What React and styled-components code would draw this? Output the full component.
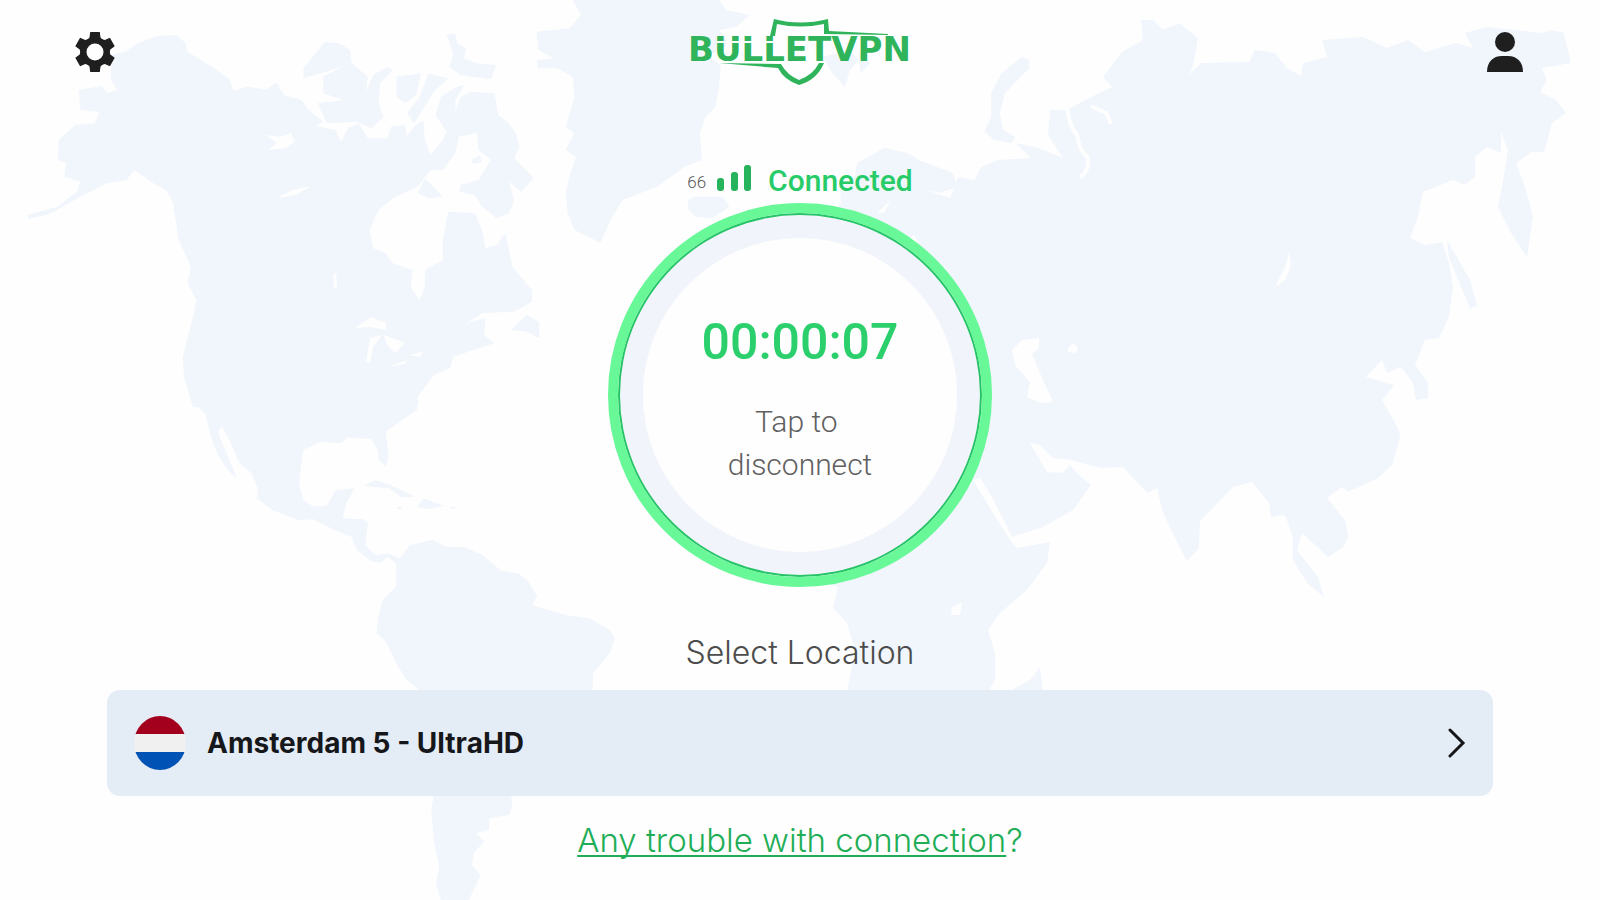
// ---------- BulletVPN : connection screen ----------

import React, { useState } from 'react';
import styled, { createGlobalStyle } from 'styled-components';

// ----- styles -----

const GlobalStyle = createGlobalStyle`
    * {
        box-sizing: border-box;
    }
    body {
        margin: 0;
        background-color: #fefefe;
        font-family: Inter, "Open Sans", sans-serif;
    }
    button {
        border: none;
        background: none;
        padding: 0;
        font: inherit;
        cursor: pointer;
    }
`

const Screen = styled.div`
    position: relative;
    min-height: 100vh;
    overflow: hidden;
    display: flex;
    flex-direction: column;
`

const MapSvg = styled.svg`
    position: absolute;
    inset: 0;
    width: 100%;
    height: 100%;
`

const Header = styled.header`
    position: relative;
    display: grid;
    grid-template-columns: 1fr auto 1fr;
    align-items: center;
    padding: 18px 70px 0;
`

const IconButton = styled.button`
    display: flex;
    justify-self: ${props => props.$side};
    color: #1f1f1f;
`

const Main = styled.main`
    position: relative;
    display: flex;
    flex-direction: column;
    align-items: center;
    padding: 76px 107px 30px;
`

const Status = styled.div`
    display: flex;
    align-items: center;
    height: 38px;
    margin-bottom: 3px;
    font-family: Roboto, sans-serif;
`

const Ping = styled.span`
    font-size: 17px;
    font-weight: 300;
    line-height: 20px;
    color: #555;
    margin: 2px 11px 0 0;
`

const StatusText = styled.span`
    font-size: 30px;
    font-weight: 500;
    line-height: 36px;
    color: #27cc69;
    margin-left: 15px;
`

const Ring = styled.button`
    width: 384px;
    height: 384px;
    padding: 25px;
    border: 10px solid #68f898;
    border-radius: 50%;
    background-color: #f1f5fb;
    box-shadow: inset 0 0 0 2px #27c467;
    font-family: Roboto, sans-serif;
`

const Disc = styled.span`
    width: 100%;
    height: 100%;
    display: flex;
    flex-direction: column;
    align-items: center;
    justify-content: center;
    gap: 29px;
    padding-top: 9px;
    border-radius: 50%;
    background-color: #fefefe;
`

const Timer = styled.span`
    font-size: 50px;
    font-weight: 500;
    line-height: 58px;
    color: #2bcf6c;
`

const Hint = styled.span`
    font-size: 30px;
    font-weight: 300;
    line-height: 43px;
    white-space: pre;
    color: #606060;
`

const Label = styled.h2`
    margin: 46px 0 17px;
    font-size: 32px;
    font-weight: 300;
    line-height: 40px;
    color: #4c4c4c;
`

const LocationButton = styled.button`
    width: 100%;
    height: 106px;
    display: flex;
    align-items: center;
    padding: 0 27px;
    border-radius: 13px;
    background-color: #e4ecf5;
    color: #15171a;
`

const LocationName = styled.span`
    flex: 1;
    margin-left: 21px;
    text-align: left;
    font-size: 28px;
    font-weight: 700;
    line-height: 36px;
`

const Help = styled.p`
    margin: 24px 0 0;
    font-size: 33px;
    font-weight: 300;
    line-height: 40px;
    color: #1fae57;
`

const HelpLink = styled.a`
    color: inherit;
    text-decoration: underline;
    text-decoration-thickness: 2px;
    text-underline-offset: 3px;
    text-decoration-skip-ink: none;
`

const LogoText = styled.text`
    font-family: "DejaVu Sans", sans-serif;
    font-size: 34px;
    font-weight: 700;
`

// ----- drawings -----

const WorldMap = () => (
    <MapSvg viewBox="0 0 1600 900" preserveAspectRatio="xMidYMin slice" aria-hidden="true">
        <g fill="#f1f6fc">
            {/* north america */}
            <g transform="scale(0.3571 0.3333)">
                <path d="M78 645L160 620 215 575 225 545 180 530 185 490 162 480 165 420 210 375 265 370 278 335 225 330 220 270 285 258 300 278 328 270 310 240 312 165 350 155 385 130 440 108 495 105 520 130 525 155 600 205 640 235 655 272 690 260 745 268 775 248 795 285 845 300 860 325 905 365 885 378 940 390 955 425 975 385 1005 370 1030 415 1085 415 1095 380 1135 375 1140 410 1105 450 1130 420 1160 380 1185 360 1190 420 1205 465 1240 420 1250 395 1220 345 1235 290 1270 265 1300 255 1275 300 1275 335 1290 290 1320 275 1385 280 1395 345 1420 365 1445 400 1455 440 1440 475 1495 535 1460 575 1425 545 1440 600 1425 640 1390 655 1350 620 1330 585 1285 575 1290 555 1340 540 1375 480 1340 450 1335 400 1285 410 1275 460 1240 510 1205 510 1170 560 1100 595 1060 630 1035 690 1045 745 1080 760 1100 790 1155 810 1150 860 1175 900 1190 860 1190 810 1240 780 1240 720 1255 635 1330 640 1350 690 1360 745 1390 735 1415 700 1435 800 1490 870 1490 905 1440 935 1350 940 1305 970 1360 955 1355 1005 1385 1030 1340 1045 1270 1070 1260 1105 1215 1125 1170 1190 1168 1222 540 1222 515 1130 512 1070 545 930 550 900 525 850 535 800 500 720 485 610 465 570 430 550 375 510 355 540 300 550 225 590 140 642 78 657Z" />
                <path d="M890 310L960 300 905 280 905 230 960 200 850 235 850 205 910 125 950 130 980 150 985 190 1030 230 1025 275 1045 225 1085 200 1100 210 1065 250 1060 310 1075 350 1040 385 1000 365 915 370Z" />
                <path d="M1110 230L1180 220 1165 285 1135 310 1110 290ZM1200 220L1255 235 1215 275 1160 370 1140 340 1175 290Z" />
                <path d="M1250 105L1275 100 1280 130 1305 145 1300 175 1335 190 1390 195 1375 238 1290 225 1258 200 1270 160Z" />
                <path d="M1320 480L1345 465 1350 485 1325 492ZM1170 580L1190 535 1240 590 1200 595ZM1430 990L1475 945 1510 965 1510 1015 1475 995Z" />
            </g>
            {/* central and south america */}
            <g transform="translate(100 400) scale(0.3444 0.3333)">
                <path d="M262 0L305 40 325 120 345 170 375 215 398 235 380 190 355 130 342 95 355 80 380 130 405 190 440 220 458 265 455 295 500 330 575 360 620 358 680 390 730 410 745 450 790 485 815 488 835 470 860 490 860 560 820 600 808 650 803 700 830 725 860 790 890 840 935 875 1430 875 1432 820 1480 760 1495 715 1480 690 1420 655 1350 645 1255 615 1270 590 1245 545 1215 520 1165 512 1110 465 1060 442 1005 440 965 420 900 435 870 475 835 460 800 465 770 435 778 370 765 358 705 355 715 310 740 265 685 270 660 315 620 320 590 300 578 250 590 150 640 125 700 130 720 112 790 118 805 150 810 180 830 200 838 170 830 95 870 65 920 30 925 0Z" />
                <path d="M765 258L800 240 850 258 915 290 875 292 840 265ZM920 320L940 295 1000 318 950 328ZM858 320L882 320 870 330ZM1020 318L1042 323 1020 326Z" />
                <path d="M970 1170L1190 1170 1198 1215 1188 1245 1130 1255 1130 1290 1092 1300 1115 1325 1085 1360 1080 1395 1105 1425 1085 1470 1070 1500 990 1500 975 1450 985 1400 970 1330 962 1235Z" />
            </g>
            {/* greenland, iceland and the northern islands */}
            <g transform="translate(540 0) scale(0.3444 0.3333)">
                <path d="M95 0L520 0 540 30 610 45 570 80 520 90 545 125 530 150 480 165 525 195 520 260 510 320 480 350 465 400 470 480 420 500 340 560 240 600 210 650 175 728 150 715 100 690 80 640 75 580 85 530 105 470 75 450 100 400 75 380 100 290 95 230 50 205 -5 205 -10 180 40 175 -5 150 -10 95 85 85 120 45Z" />
                <path d="M430 600L450 590 530 590 550 620 500 655 450 650 430 625Z" />
                <path d="M820 170L900 150 925 180 900 210 885 262 850 220ZM925 150L960 190 930 220Z" />
                <path d="M1420 180L1400 170 1340 220 1310 280 1310 350 1290 395 1320 420 1370 430 1380 410 1345 390 1335 340 1350 280 1420 205Z" />
            </g>
            {/* europe, asia and africa */}
            <path d="M857 163L884 148 908 153 919 160 953 173 957 187 940 193 920 188 950 198 958 177 974 180 981 167 998 160 1031 158 1015 143 1036 147 1063 158 1048 135 1050 110 1067 110 1091 97 1112 87 1103 77 1122 52 1143 40 1141 20 1153 20 1163 30 1179 23 1198 38 1193 67 1189 75 1201 63 1249 62 1255 50 1275 53 1287 68 1301 76 1303 63 1327 57 1322 40 1363 37 1387 48 1408 40 1425 52 1456 43 1473 48 1465 33 1487 27 1542 33 1552 30 1564 33 1571 63 1542 68 1547 80 1540 92 1556 100 1566 113 1552 123 1544 152 1532 152 1516 163 1525 187 1533 217 1527 257 1511 233 1498 207 1502 187 1508 150 1501 132 1501 153 1487 147 1475 157 1475 177 1465 185 1453 180 1423 192 1418 217 1410 238 1425 245 1442 242 1449 263 1453 287 1449 317 1439 338 1425 340 1415 365 1428 383 1428 398 1416 400 1413 383 1401 367 1387 373 1382 360 1366 377 1394 385 1382 400 1399 430 1400 438 1392 465 1378 478 1348 492 1342 487 1327 498 1345 520 1348 537 1343 547 1328 557 1302 533 1297 550 1318 577 1324 597 1307 583 1293 560 1293 537 1285 515 1271 517 1269 503 1252 482 1233 487 1200 521 1199 548 1187 561 1172 532 1162 510 1157 488 1148 493 1138 483 1123 467 1100 468 1072 460 1053 458 1040 445 1030 443 1047 472 1062 473 1070 465 1077 473 1091 485 1073 510 1043 527 1012 537 1007 527 992 497 980 478 973 480 993 513 1010 540 1017 548 1050 542 1047 563 1027 590 1000 613 988 630 995 653 995 680 988 692 847 692 855 650 847 623 833 608 838 587 760 560 760 300 820 230 841 203 840 190 855 177Z" />
            <path d="M1447 240L1470 280 1477 306 1470 308 1449 258ZM1012 690L1030 680 1040 667 1043 690Z" />
        </g>
        {/* lakes and inland seas */}
        <g fill="#fefefe">
            <path d="M266 135L280 137 291 133 295 142 286 148 268 150 277 143ZM277 198L293 190 311 186 296 195ZM355 328L371 317 386 323 386 330 370 327ZM366 362L370 338 382 335 373 347 370 363ZM384 335L405 343 395 353 387 345ZM388 367L407 360 405 364ZM409 355L423 352 420 357ZM333 275L336 273 337 287 334 288Z" />
            <path d="M1012 350L1022 340 1039 338 1039 348 1032 354 1043 380 1053 402 1040 403 1027 397 1030 382 1015 365Z" />
            <path d="M1068 348L1073 343 1078 347 1076 353 1068 352ZM1289 252L1291 265 1285 280 1275 287 1286 265ZM952 607L962 602 960 615 951 615ZM877 213L891 200 884 213ZM907 240L914 235 918 242 910 246Z" />
        </g>
        <path d="M1067 108Q1069 125 1077 135 1079 150 1088 158 1089 172 1080 177M1091 106L1106 113 1111 124" fill="none" stroke="#fefefe" strokeWidth="4" />
    </MapSvg>
);

const Logo = () => (
    <svg width="222" height="68" viewBox="0 0 222 68" fill="#2fb45c" role="img" aria-label="BulletVPN">
        <path d="M81 18L85 1Q111 8 139 1L140 13 199 16 199 17 135 16 135 6Q111 11 88 6L86 18Z" />
        <path d="M30 45L92 46Q98 57 110 62 124 57 130 45L135 45Q128 62 110 67 95 62 89 50Z" />
        <LogoText x="-1" y="43">BULLETVPN</LogoText>
        <path d="M28 24H96" stroke="#fefefe" strokeWidth="2" />
    </svg>
);

const GearIcon = () => (
    <svg width="50" height="50" viewBox="-25 -25 50 50" fill="currentColor">
        <circle r="11.5" fill="none" stroke="currentColor" strokeWidth="6" />
        {[0, 60, 120, 180, 240, 300].map(angle => (
            <path key={angle} d="M-8 -12L-5.5 -14.5 -4.8 -20H4.8L5.5 -14.5 8 -12Z" transform={`rotate(${angle})`} />
        ))}
    </svg>
);

const ProfileIcon = () => (
    <svg width="50" height="42" viewBox="0 0 50 42" fill="currentColor">
        <circle cx="25" cy="11" r="10" />
        <path d="M7 41C7 31 13 25 22 25H28C37 25 43 31 43 41Z" />
    </svg>
);

const SignalIcon = () => (
    <svg width="36" height="32" viewBox="0 0 36 32" fill="#27b35b">
        <rect x="0" y="13" width="7" height="13" rx="3" />
        <rect x="14" y="7" width="7" height="19" rx="3" />
        <rect x="27" y="0" width="7" height="26" rx="3" />
    </svg>
);

const FlagIcon = () => (
    <svg width="52" height="54" viewBox="0 0 52 54">
        <clipPath id="flag">
            <ellipse cx="26" cy="27" rx="26" ry="27" />
        </clipPath>
        <g clipPath="url(#flag)">
            <rect width="52" height="54" fill="#f0f0f0" />
            <rect width="52" height="18" fill="#a2001d" />
            <rect y="36" width="52" height="18" fill="#0052b4" />
        </g>
    </svg>
);

const ChevronIcon = () => (
    <svg width="18" height="30" viewBox="0 0 18 30" fill="none" stroke="currentColor" strokeWidth="3">
        <path d="M2 2L15 15 2 28" strokeLinecap="round" />
    </svg>
);

// ----- component -----

export default function App() {
    const [connected, setConnected] = useState(true);

    return (
        <Screen>
            <GlobalStyle />
            <WorldMap />
            <Header>
                <IconButton $side="start" aria-label="Settings">
                    <GearIcon />
                </IconButton>
                <Logo />
                <IconButton $side="end" aria-label="Account">
                    <ProfileIcon />
                </IconButton>
            </Header>
            <Main>
                <Status>
                    <Ping>66</Ping>
                    <SignalIcon />
                    <StatusText>{connected ? 'Connected' : 'Disconnected'}</StatusText>
                </Status>
                <Ring onClick={() => setConnected(!connected)}>
                    <Disc>
                        <Timer>{connected ? '00:00:07' : '00:00:00'}</Timer>
                        <Hint>{connected ? 'Tap to \ndisconnect' : 'Tap to \nconnect'}</Hint>
                    </Disc>
                </Ring>
                <Label>Select Location</Label>
                <LocationButton>
                    <FlagIcon />
                    <LocationName>Amsterdam 5 - UltraHD</LocationName>
                    <ChevronIcon />
                </LocationButton>
                <Help><HelpLink href="#help">Any trouble with connection</HelpLink>?</Help>
            </Main>
        </Screen>
    );
}
